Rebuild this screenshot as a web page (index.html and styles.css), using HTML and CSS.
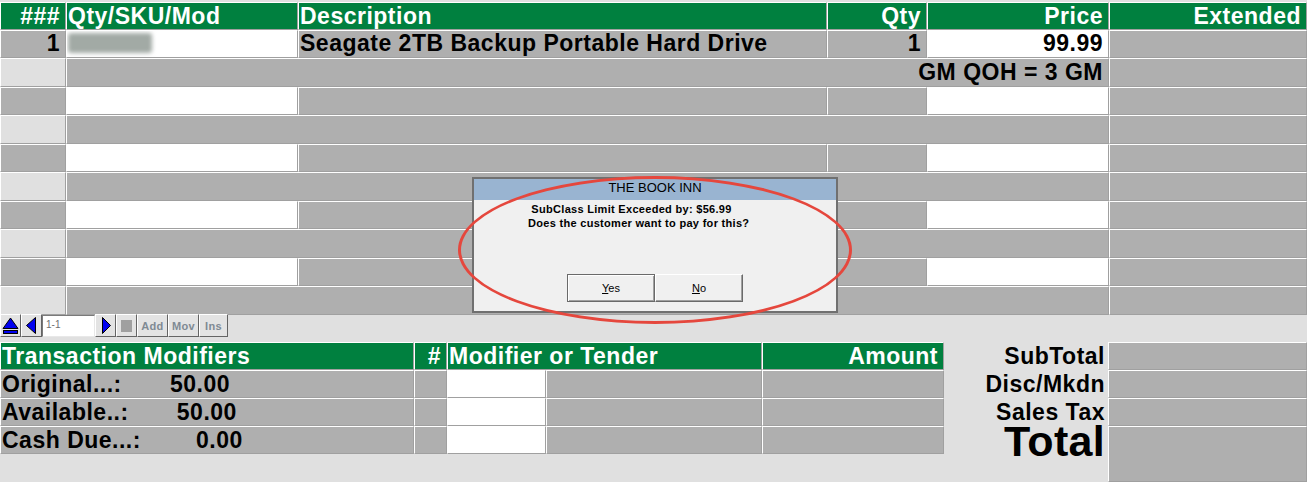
FILE: index.html
```html
<!DOCTYPE html>
<html>
<head>
<meta charset="utf-8">
<link rel="stylesheet" href="styles.css">
</head>
<body>
<div class="screen">
  <div class="lines">
    <div class="cell hd num">###</div>
    <div class="cell hd">Qty/SKU/Mod</div>
    <div class="cell hd">Description</div>
    <div class="cell hd num">Qty</div>
    <div class="cell hd num">Price</div>
    <div class="cell hd num">Extended</div>

    <div class="cell g num">1</div>
    <div class="cell w"><span class="sku"></span></div>
    <div class="cell g">Seagate 2TB Backup Portable Hard Drive</div>
    <div class="cell g num">1</div>
    <div class="cell w num">99.99</div>
    <div class="cell g"></div>

    <div class="cell l sub"></div>
    <div class="cell g sub span4 num">GM QOH = 3 GM</div>
    <div class="cell g sub"></div>

    <div class="cell g"></div><div class="cell w"></div><div class="cell g"></div><div class="cell g"></div><div class="cell w"></div><div class="cell g"></div>
    <div class="cell l sub"></div><div class="cell g sub span4"></div><div class="cell g sub"></div>

    <div class="cell g"></div><div class="cell w"></div><div class="cell g"></div><div class="cell g"></div><div class="cell w"></div><div class="cell g"></div>
    <div class="cell l sub"></div><div class="cell g sub span4"></div><div class="cell g sub"></div>

    <div class="cell g"></div><div class="cell w"></div><div class="cell g"></div><div class="cell g"></div><div class="cell w"></div><div class="cell g"></div>
    <div class="cell l sub"></div><div class="cell g sub span4"></div><div class="cell g sub"></div>

    <div class="cell g"></div><div class="cell w"></div><div class="cell g"></div><div class="cell g"></div><div class="cell w"></div><div class="cell g"></div>
    <div class="cell l sub"></div><div class="cell g sub span4"></div><div class="cell g sub"></div>
  </div>

  <div class="toolbar">
    <div class="tb ico">
      <svg width="19" height="21" viewBox="0 0 19 21"><path d="M9.5 3 L17 13.5 H2 Z" fill="#0000f0" stroke="#000" stroke-width="1"/><rect x="2.5" y="15.5" width="14" height="3" fill="#0000f0" stroke="#000" stroke-width="1"/></svg>
    </div>
    <div class="tb ico">
      <svg width="19" height="21" viewBox="0 0 19 21"><path d="M4.5 10.5 L13.5 2.5 V18.5 Z" fill="#0000f0" stroke="#000" stroke-width="1"/></svg>
    </div>
    <div class="pos">1-1</div>
    <div class="tb ico">
      <svg width="19" height="21" viewBox="0 0 19 21"><path d="M14.5 10.5 L6.5 2.5 V18.5 Z" fill="#0000f0" stroke="#000" stroke-width="1"/></svg>
    </div>
    <div class="tb ico"><span class="stop"></span></div>
    <div class="tb txt add">Add</div>
    <div class="tb txt mov">Mov</div>
    <div class="tb txt ins">Ins</div>
  </div>

  <div class="bottom">
    <div class="tenders">
      <div class="cell hd">Transaction Modifiers</div>
      <div class="cell hd num">#</div>
      <div class="cell hd span2">Modifier or Tender</div>
      <div class="cell hd num">Amount</div>

      <div class="cell g pre">Original...:       50.00</div>
      <div class="cell g"></div><div class="cell w"></div><div class="cell g"></div><div class="cell g"></div>

      <div class="cell g pre">Available..:       50.00</div>
      <div class="cell g"></div><div class="cell w"></div><div class="cell g"></div><div class="cell g"></div>

      <div class="cell g pre">Cash Due...:        0.00</div>
      <div class="cell g"></div><div class="cell w"></div><div class="cell g"></div><div class="cell g"></div>
    </div>
    <div class="labels">
      <div class="lab">SubTotal</div>
      <div class="lab">Disc/Mkdn</div>
      <div class="lab">Sales Tax</div>
      <div class="lab total">Total</div>
    </div>
    <div class="totals">
      <div class="cell g"></div>
      <div class="cell g"></div>
      <div class="cell g"></div>
      <div class="cell g grow"></div>
    </div>
  </div>
</div>

<div class="dialog">
  <div class="dlg-title">THE BOOK INN</div>
  <div class="dlg-body">
    <div class="msg"> SubClass Limit Exceeded by: $56.99</div>
    <div class="msg">Does the customer want to pay for this?</div>
  </div>
  <div class="dlg-buttons">
    <div class="btn def"><u>Y</u>es</div>
    <div class="btn"><u>N</u>o</div>
  </div>
</div>
<div class="circle"></div>
</body>
</html>
```

FILE: styles.css
```css
* { box-sizing: border-box; }
html, body { margin: 0; padding: 0; }
body {
  background: #e0e0e0;
  font-family: "Liberation Sans", Arial, sans-serif;
  width: 1307px;
  height: 482px;
  overflow: hidden;
  position: relative;
}
.screen {
  display: flex;
  flex-direction: column;
  height: 482px;
}

/* line item grid */
.lines {
  display: grid;
  grid-template-columns: 66px 232px 529px 100px 182px 198px;
  grid-template-rows: 28px repeat(5, 28px 29px);
  margin-top: 2px;
}
.cell {
  border-style: solid;
  border-width: 1px;
  border-color: #fff #a0a0a0 #a0a0a0 #fff;
  overflow: hidden;
  white-space: nowrap;
  font-weight: bold;
  font-size: 23px;
  letter-spacing: 0.5px;
  line-height: 24px;
  padding: 0 5px 0 1px;
  color: #000;
}
.hd { background: #00803f; color: #fff; line-height: 26px; }
.g { background: #afafaf; }
.w { background: #fff; }
.l { background: #e0e0e0; }
.sub { line-height: 26px; }
.num { text-align: right; }
.span4 { grid-column: span 4; }
.span2 { grid-column: span 2; }
.pre { white-space: pre; line-height: 26px; }

.sku {
  display: block;
  width: 84px;
  height: 20px;
  margin-top: 2px;
  background: #a2aaa5;
  border-radius: 3px;
  filter: blur(2px);
}

/* toolbar */
.toolbar {
  display: flex;
  height: 23px;
  margin-top: -1px;
}
.tb {
  width: 21px;
  height: 23px;
  background: #e3e3e3;
  border: 1px solid;
  border-color: #fff #646464 #646464 #fff;
  display: flex;
  align-items: center;
  justify-content: center;
}
.txt {
  font-size: 11px;
  font-weight: bold;
  color: #7f8a94;
  letter-spacing: 0.3px;
}
.add, .mov { width: 31px; }
.ins { width: 29px; }
.stop {
  width: 11px;
  height: 12px;
  background: #a0a0a0;
}
.pos {
  width: 53px;
  height: 22px;
  margin: 1px 0 0 0;
  background: #fff;
  border: 1px solid;
  border-color: #7a7a7a #e8e8e8 #e8e8e8 #7a7a7a;
  font-size: 10px;
  color: #707070;
  padding: 3px 0 0 3px;
}

/* bottom */
.bottom {
  flex: 1;
  display: flex;
  margin-top: 5px;
}
.tenders {
  width: 944px;
  display: grid;
  grid-template-columns: 414px 33px 99px 216px 182px;
  grid-template-rows: repeat(4, 28px);
}
.labels {
  width: 164px;
  display: flex;
  flex-direction: column;
  text-align: right;
  padding-right: 3px;
}
.lab {
  height: 28px;
  font-weight: bold;
  font-size: 23px;
  letter-spacing: 0.5px;
  line-height: 28px;
  white-space: nowrap;
}
.lab.total {
  font-size: 43px;
  line-height: 30px;
  letter-spacing: 0.3px;
  height: auto;
}
.totals {
  width: 199px;
  display: flex;
  flex-direction: column;
}
.totals .cell { height: 28px; }
.totals .grow { flex: 1; }

/* dialog */
.dialog {
  position: absolute;
  left: 472px;
  top: 177px;
  width: 366px;
  height: 136px;
  background: #f0f0f0;
  border: 2px solid #707070;
  display: flex;
  flex-direction: column;
}
.dlg-title {
  height: 21px;
  background: #99b4d1;
  text-align: center;
  font-size: 13px;
  line-height: 18px;
  color: #000;
}
.dlg-body {
  padding: 2px 0 0 54px;
}
.msg {
  font-size: 11px;
  font-weight: bold;
  letter-spacing: 0.3px;
  line-height: 14px;
  white-space: pre;
  color: #000;
}
.dlg-buttons {
  margin-top: auto;
  margin-bottom: 9px;
  display: flex;
  justify-content: center;
}
.btn {
  width: 88px;
  height: 28px;
  background: #f0f0f0;
  border: 1px solid;
  border-color: #fff #6a6a6a #6a6a6a #fff;
  box-shadow: inset -1px -1px 0 #a0a0a0;
  font-size: 11px;
  text-align: center;
  line-height: 26px;
  color: #000;
}
.btn.def {
  width: 88px;
  border-color: #6a6a6a;
  box-shadow: inset 1px 1px 0 #fff, inset -1px -1px 0 #a0a0a0;
}

.circle {
  position: absolute;
  left: 458px;
  top: 176px;
  width: 394px;
  height: 148px;
  border: 3px solid #e5473d;
  border-radius: 50%;
}
```
